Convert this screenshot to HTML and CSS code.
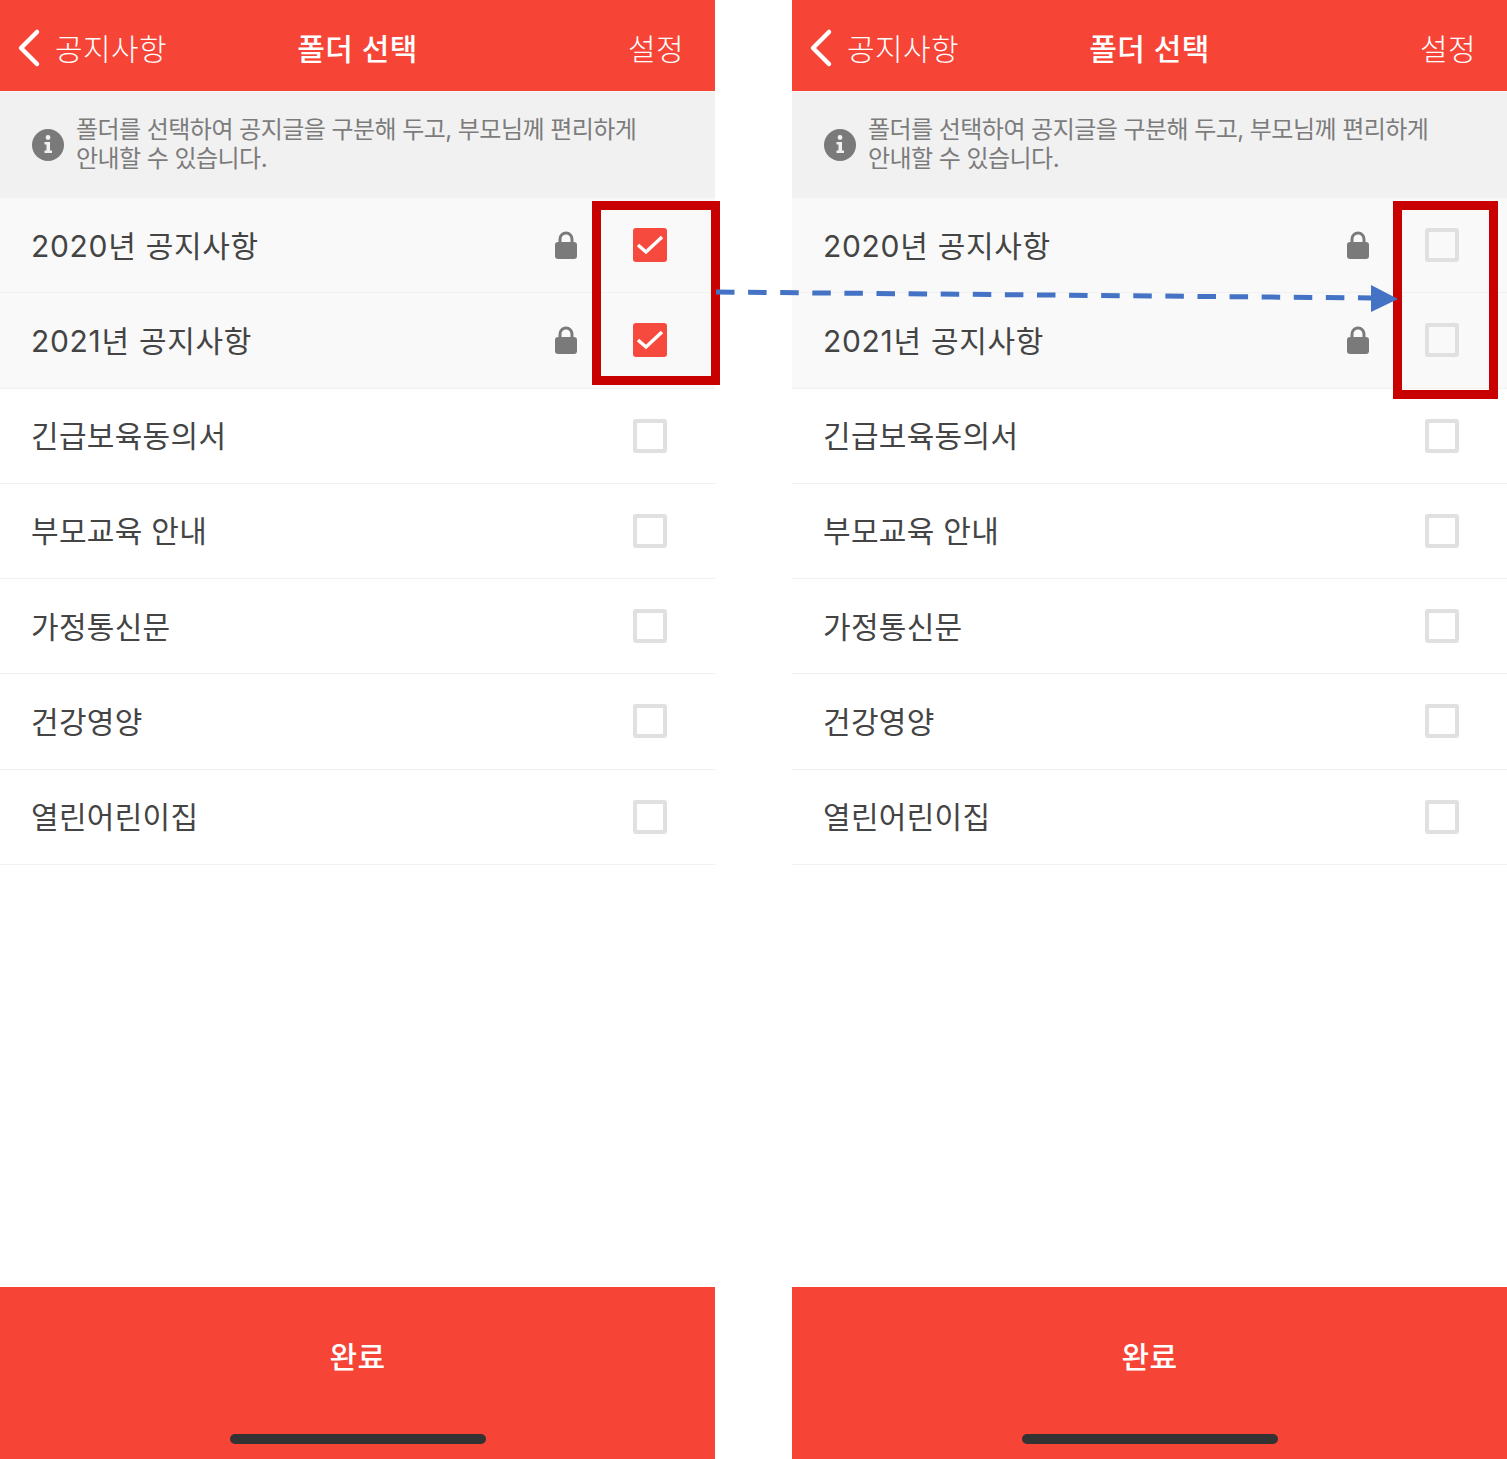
FILE: index.html
```html
<!DOCTYPE html>
<html lang="ko">
<head>
  <meta charset="UTF-8">
  <title>폴더 선택</title>
  <link rel="stylesheet" href="styles.css">
</head>
<body>

  <div class="screen">
    <header class="topbar">
      <div class="back">
        <svg class="back-icon" width="24" height="40" viewBox="0 0 24 40"><path d="M20 4 L4 20 L20 36" /></svg>
        <span>공지사항</span>
      </div>
      <h1>폴더 선택</h1>
      <span class="setting">설정</span>
    </header>
    <div class="info">
      <svg class="info-icon" width="32" height="32" viewBox="0 0 32 32">
        <circle cx="16" cy="16" r="16" fill="#7a7a7a" />
        <circle cx="16" cy="8.5" r="2.4" fill="#f1f1f1" />
        <path d="M12.5 13 H18 V21.5 H20 V24 H12.5 V21.5 H14.5 V15.5 H12.5 Z" fill="#f1f1f1" />
      </svg>
      <p>폴더를 선택하여 공지글을 구분해 두고, 부모님께 편리하게<br>안내할 수 있습니다.</p>
    </div>
    <ul class="folders">
      <li class="folder locked">
        <span class="name">2020년 공지사항</span>
        <svg class="lock" width="24" height="28" viewBox="0 0 24 28"><path d="M6 13 V8 a6 6 0 0 1 12 0 V13" /><rect x="1" y="11" width="22" height="17" rx="3" /></svg>
        <span class="check on"><svg width="34" height="34" viewBox="0 0 34 34"><path d="M5 17 L13 24 L29 9" /></svg></span>
      </li>
      <li class="folder locked">
        <span class="name">2021년 공지사항</span>
        <svg class="lock" width="24" height="28" viewBox="0 0 24 28"><path d="M6 13 V8 a6 6 0 0 1 12 0 V13" /><rect x="1" y="11" width="22" height="17" rx="3" /></svg>
        <span class="check on"><svg width="34" height="34" viewBox="0 0 34 34"><path d="M5 17 L13 24 L29 9" /></svg></span>
      </li>
      <li class="folder"><span class="name">긴급보육동의서</span><span class="check"></span></li>
      <li class="folder"><span class="name">부모교육 안내</span><span class="check"></span></li>
      <li class="folder"><span class="name">가정통신문</span><span class="check"></span></li>
      <li class="folder"><span class="name">건강영양</span><span class="check"></span></li>
      <li class="folder"><span class="name">열린어린이집</span><span class="check"></span></li>
    </ul>
    <footer class="done">
      <span>완료</span>
      <div class="home-bar"></div>
    </footer>
  </div>

  <div class="screen">
    <header class="topbar">
      <div class="back">
        <svg class="back-icon" width="24" height="40" viewBox="0 0 24 40"><path d="M20 4 L4 20 L20 36" /></svg>
        <span>공지사항</span>
      </div>
      <h1>폴더 선택</h1>
      <span class="setting">설정</span>
    </header>
    <div class="info">
      <svg class="info-icon" width="32" height="32" viewBox="0 0 32 32">
        <circle cx="16" cy="16" r="16" fill="#7a7a7a" />
        <circle cx="16" cy="8.5" r="2.4" fill="#f1f1f1" />
        <path d="M12.5 13 H18 V21.5 H20 V24 H12.5 V21.5 H14.5 V15.5 H12.5 Z" fill="#f1f1f1" />
      </svg>
      <p>폴더를 선택하여 공지글을 구분해 두고, 부모님께 편리하게<br>안내할 수 있습니다.</p>
    </div>
    <ul class="folders">
      <li class="folder locked">
        <span class="name">2020년 공지사항</span>
        <svg class="lock" width="24" height="28" viewBox="0 0 24 28"><path d="M6 13 V8 a6 6 0 0 1 12 0 V13" /><rect x="1" y="11" width="22" height="17" rx="3" /></svg>
        <span class="check"></span>
      </li>
      <li class="folder locked">
        <span class="name">2021년 공지사항</span>
        <svg class="lock" width="24" height="28" viewBox="0 0 24 28"><path d="M6 13 V8 a6 6 0 0 1 12 0 V13" /><rect x="1" y="11" width="22" height="17" rx="3" /></svg>
        <span class="check"></span>
      </li>
      <li class="folder"><span class="name">긴급보육동의서</span><span class="check"></span></li>
      <li class="folder"><span class="name">부모교육 안내</span><span class="check"></span></li>
      <li class="folder"><span class="name">가정통신문</span><span class="check"></span></li>
      <li class="folder"><span class="name">건강영양</span><span class="check"></span></li>
      <li class="folder"><span class="name">열린어린이집</span><span class="check"></span></li>
    </ul>
    <footer class="done">
      <span>완료</span>
      <div class="home-bar"></div>
    </footer>
  </div>

  <!-- annotations on top of the screenshots -->
  <div class="mark mark-left"></div>
  <div class="mark mark-right"></div>
  <svg class="arrow" width="700" height="40" viewBox="0 0 700 40">
    <path d="M0 4 L656 10" />
    <polygon points="655,-3 682,11 655,24" />
  </svg>

</body>
</html>
```

FILE: styles.css
```css
html, body {
  margin: 0;
  padding: 0;
  height: 1459px;
  background: #fff;
  overflow: hidden;
}

body {
  display: flex;
  gap: 77px;
  font-family: Inter, "Noto Sans CJK KR", sans-serif;
  color: #444;
}

.screen {
  width: 715px;
  height: 1459px;
  display: flex;
  flex-direction: column;
}

.topbar {
  height: 91px;
  flex: none;
  display: flex;
  align-items: center;
  justify-content: space-between;
  position: relative;
  background: #f64537;
  color: #fff;
  font-size: 30px;
  letter-spacing: 0.4px;
  padding: 3px 31px 0 17px;
  box-sizing: border-box;
}

.back {
  display: flex;
  align-items: center;
  gap: 14px;
  font-weight: 300;
}

.back-icon {
  margin-top: 1px;
}

.back-icon path {
  fill: none;
  stroke: #fff;
  stroke-width: 4.5;
  stroke-linecap: round;
  stroke-linejoin: round;
}

.topbar h1 {
  position: absolute;
  left: 0;
  right: 0;
  margin: 0;
  text-align: center;
  font-size: 30px;
  font-weight: 500;
}

.setting {
  font-weight: 300;
}

.info {
  height: 107px;
  flex: none;
  box-sizing: border-box;
  display: flex;
  align-items: center;
  gap: 12px;
  padding-left: 32px;
  background: #f1f1f1;
  border-top: 1px solid #f6f6f6;
  color: #7c7c7c;
}

.info p {
  margin: 0;
  padding-bottom: 2px;
  font-size: 24px;
  line-height: 29px;
  letter-spacing: -0.55px;
}

.folders {
  list-style: none;
  margin: 0;
  padding: 0;
}

.folder {
  height: 95.25px;
  box-sizing: border-box;
  display: flex;
  align-items: center;
  padding: 0 48px 0 31px;
  border-bottom: 1px solid #f1f1f1;
}

.folder.locked {
  background: #f9f9f9;
}

.name {
  flex: 1;
  padding-bottom: 3px;
  font-size: 30px;
  letter-spacing: 0.3px;
}

.locked .name {
  letter-spacing: 0.7px;
}

.lock {
  margin-right: 55px;
}

.lock path {
  fill: none;
  stroke: #7a7a7a;
  stroke-width: 3;
}

.lock rect {
  fill: #7a7a7a;
}

.check {
  width: 34px;
  height: 34px;
  box-sizing: border-box;
  border: 4px solid #e0e0e0;
  border-radius: 3px;
  flex: none;
}

.check.on {
  background: #f64a3e;
  border: none;
}

.check svg {
  display: block;
}

.check path {
  fill: none;
  stroke: #fff;
  stroke-width: 3.5;
}

.done {
  margin-top: auto;
  height: 172px;
  flex: none;
  background: #f64537;
  color: #fff;
  position: relative;
  text-align: center;
  font-size: 30px;
  font-weight: 500;
  line-height: 140px;
  letter-spacing: 0.4px;
}

.home-bar {
  position: absolute;
  left: 230px;
  bottom: 15px;
  width: 256px;
  height: 10px;
  border-radius: 5px;
  background: #333;
}

.mark {
  position: absolute;
  box-sizing: border-box;
  border: 9px solid #c80000;
}

.mark-left {
  left: 592px;
  top: 201px;
  width: 128px;
  height: 184px;
}

.mark-right {
  left: 1393px;
  top: 201px;
  width: 105px;
  height: 198px;
}

.arrow {
  position: absolute;
  left: 716px;
  top: 288px;
  overflow: visible;
}

.arrow path {
  fill: none;
  stroke: #4472c4;
  stroke-width: 5;
  stroke-dasharray: 18.5 13.6;
}

.arrow polygon {
  fill: #4472c4;
}
```
